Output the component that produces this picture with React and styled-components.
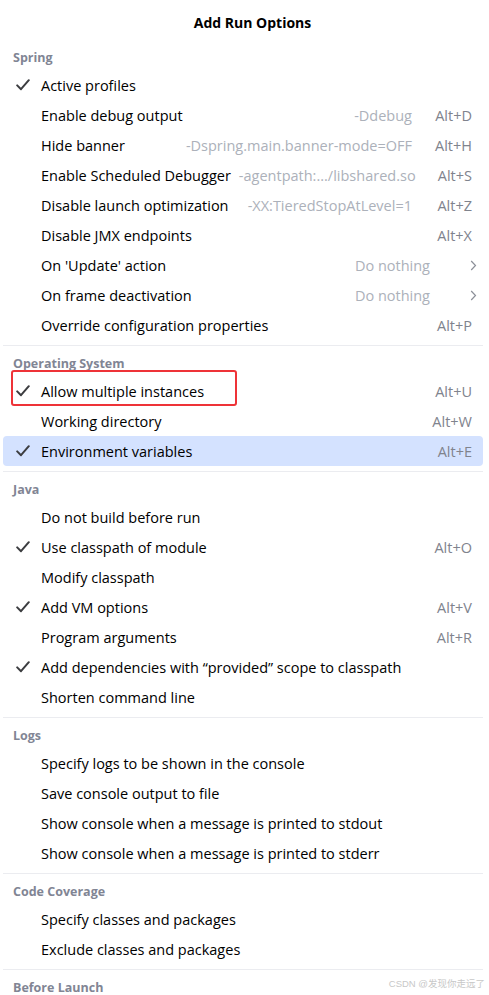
import React from "react";
import styled, { createGlobalStyle } from "styled-components";

const Global = createGlobalStyle`
  html, body { margin: 0; padding: 0; background: #ffffff; }
  body { font-family: "Open Sans", "Noto Sans", "Noto Sans CJK SC", sans-serif; }
`;

const Popup = styled.div`
  width: 489px;
  height: 995px;
  overflow: hidden;
  background: #ffffff;
  position: relative;
  display: flex;
  flex-direction: column;
`;

const Title = styled.div`
  height: 40px;
  flex: none;
  display: flex;
  align-items: center;
  justify-content: center;
  padding: 4px 0 0 16px;
  box-sizing: border-box;
  font-weight: 700;
  font-size: 14px;
  color: #000;
`;

const Separator = styled.div`
  height: 1px;
  margin: 5px 6px 0 3px;
  background: #ebecf0;
  flex: none;
`;

const Header = styled.div`
  height: 30px;
  flex: none;
  box-sizing: border-box;
  padding: 10px 0 0 13px;
  font-size: 12.5px;
  line-height: 16px;
  font-weight: 700;
  color: #818594;
`;

const Row = styled.div`
  height: 30px;
  flex: none;
  margin: 0 6px 0 3px;
  padding: 0 11px 0 13px;
  box-sizing: border-box;
  display: flex;
  align-items: center;
  border-radius: 4px;
  background: ${(p) => (p.$selected ? "#d4e2ff" : "transparent")};
  position: relative;
  font-size: 14.5px;
  color: #000;
  white-space: nowrap;
`;

const CheckBox = styled.span`
  width: 25px;
  flex: none;
  display: flex;
  align-items: center;
`;

const Label = styled.span`
  flex: 1;
`;

const Hint = styled.span`
  color: #acb1ba;
  margin-left: 8px;
`;

const Shortcut = styled.span`
  flex: 0 1 60px;
  min-width: max-content;
  text-align: right;
  color: #80838d;
`;

const SubArrow = styled.span`
  width: 47px;
  flex: none;
  display: flex;
  justify-content: flex-end;
  margin-right: -5px;
`;

const Marked = styled.div`
  position: absolute;
  left: 8px;
  top: -6px;
  width: 226px;
  height: 36px;
  box-sizing: border-box;
  border: 2px solid #ee3338;
  border-radius: 3px;
  pointer-events: none;
`;

const Watermark = styled.div`
  position: absolute;
  right: 4px;
  bottom: 5px;
  font-size: 9.5px;
  color: #c8c8c8;
  font-family: "Liberation Sans", "Noto Sans CJK SC", sans-serif;
`;

const Check = () => (
  <svg width="14" height="12" viewBox="0 0 14 12">
    <path d="M1.2 6.4 L5 10.2 L12.8 1.2" fill="none" stroke="#3c3d40" strokeWidth="2" strokeLinecap="round" strokeLinejoin="round" />
  </svg>
);

const Chevron = () => (
  <svg width="7" height="11" viewBox="0 0 7 11">
    <path d="M1.2 1 L5.5 5.5 L1.2 10" fill="none" stroke="#8c9099" strokeWidth="1.2" />
  </svg>
);

const sections = [
  {
    name: "Spring",
    items: [
      { label: "Active profiles", checked: true },
      { label: "Enable debug output", hint: "-Ddebug", key: "Alt+D" },
      { label: "Hide banner", hint: "-Dspring.main.banner-mode=OFF", key: "Alt+H" },
      { label: "Enable Scheduled Debugger", hint: "-agentpath:.../libshared.so", key: "Alt+S" },
      { label: "Disable launch optimization", hint: "-XX:TieredStopAtLevel=1", key: "Alt+Z" },
      { label: "Disable JMX endpoints", key: "Alt+X" },
      { label: "On 'Update' action", hint: "Do nothing", sub: true },
      { label: "On frame deactivation", hint: "Do nothing", sub: true },
      { label: "Override configuration properties", key: "Alt+P" },
    ],
  },
  {
    name: "Operating System",
    items: [
      { label: "Allow multiple instances", checked: true, key: "Alt+U", marked: true },
      { label: "Working directory", key: "Alt+W" },
      { label: "Environment variables", checked: true, key: "Alt+E", selected: true },
    ],
  },
  {
    name: "Java",
    items: [
      { label: "Do not build before run" },
      { label: "Use classpath of module", checked: true, key: "Alt+O" },
      { label: "Modify classpath" },
      { label: "Add VM options", checked: true, key: "Alt+V" },
      { label: "Program arguments", key: "Alt+R" },
      { label: "Add dependencies with \u201Cprovided\u201D scope to classpath", checked: true },
      { label: "Shorten command line" },
    ],
  },
  {
    name: "Logs",
    items: [
      { label: "Specify logs to be shown in the console" },
      { label: "Save console output to file" },
      { label: "Show console when a message is printed to stdout" },
      { label: "Show console when a message is printed to stderr" },
    ],
  },
  {
    name: "Code Coverage",
    items: [
      { label: "Specify classes and packages" },
      { label: "Exclude classes and packages" },
    ],
  },
  { name: "Before Launch", items: [] },
];

export default function App() {
  return (
    <>
      <Global />
      <Popup>
        <Title>Add Run Options</Title>
        {sections.map((s, i) => (
          <React.Fragment key={s.name}>
            {i > 0 && <Separator />}
            <Header>{s.name}</Header>
            {s.items.map((it) => (
              <Row key={it.label} $selected={it.selected}>
                <CheckBox>{it.checked && <Check />}</CheckBox>
                <Label>{it.label}</Label>
                {it.hint && <Hint>{it.hint}</Hint>}
                {it.sub ? (
                  <SubArrow>
                    <Chevron />
                  </SubArrow>
                ) : (
                  it.key && <Shortcut>{it.key}</Shortcut>
                )}
                {it.marked && <Marked />}
              </Row>
            ))}
          </React.Fragment>
        ))}
        <Watermark>CSDN @发现你走远了</Watermark>
      </Popup>
    </>
  );
}
